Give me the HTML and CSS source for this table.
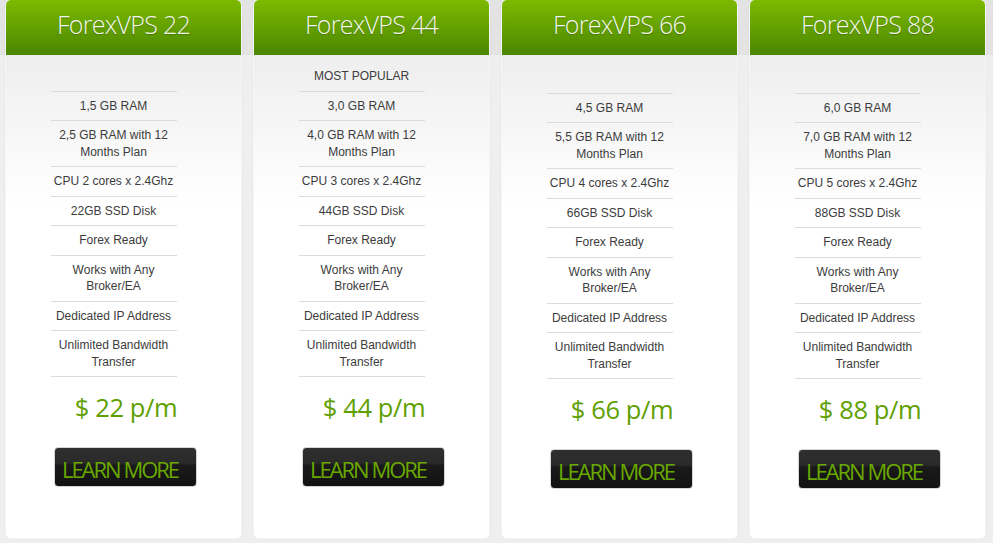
FILE: index.html
```html
<!DOCTYPE html>
<html>
<head>
<meta charset="utf-8">
<link rel="stylesheet" href="styles.css">
</head>
<body>
<div class="plans">
  <div class="card">
    <div class="head">ForexVPS 22</div>
    <div class="body">
      <ul class="features">
        <li class="empty"></li>
        <li>1,5 GB RAM</li>
        <li>2,5 GB RAM with 12<br>Months Plan</li>
        <li>CPU 2 cores x 2.4Ghz</li>
        <li>22GB SSD Disk</li>
        <li>Forex Ready</li>
        <li>Works with Any<br>Broker/EA</li>
        <li>Dedicated IP Address</li>
        <li>Unlimited Bandwidth<br>Transfer</li>
      </ul>
      <div class="price">$ 22 p/m</div>
      <a class="btn">LEARN MORE</a>
    </div>
  </div>
  <div class="card">
    <div class="head">ForexVPS 44</div>
    <div class="body">
      <ul class="features">
        <li>MOST POPULAR</li>
        <li>3,0 GB RAM</li>
        <li>4,0 GB RAM with 12<br>Months Plan</li>
        <li>CPU 3 cores x 2.4Ghz</li>
        <li>44GB SSD Disk</li>
        <li>Forex Ready</li>
        <li>Works with Any<br>Broker/EA</li>
        <li>Dedicated IP Address</li>
        <li>Unlimited Bandwidth<br>Transfer</li>
      </ul>
      <div class="price">$ 44 p/m</div>
      <a class="btn">LEARN MORE</a>
    </div>
  </div>
  <div class="card">
    <div class="head">ForexVPS 66</div>
    <div class="body">
      <ul class="features">
        <li class="empty tall"></li>
        <li>4,5 GB RAM</li>
        <li>5,5 GB RAM with 12<br>Months Plan</li>
        <li>CPU 4 cores x 2.4Ghz</li>
        <li>66GB SSD Disk</li>
        <li>Forex Ready</li>
        <li>Works with Any<br>Broker/EA</li>
        <li>Dedicated IP Address</li>
        <li>Unlimited Bandwidth<br>Transfer</li>
      </ul>
      <div class="price">$ 66 p/m</div>
      <a class="btn">LEARN MORE</a>
    </div>
  </div>
  <div class="card">
    <div class="head">ForexVPS 88</div>
    <div class="body">
      <ul class="features">
        <li class="empty tall"></li>
        <li>6,0 GB RAM</li>
        <li>7,0 GB RAM with 12<br>Months Plan</li>
        <li>CPU 5 cores x 2.4Ghz</li>
        <li>88GB SSD Disk</li>
        <li>Forex Ready</li>
        <li>Works with Any<br>Broker/EA</li>
        <li>Dedicated IP Address</li>
        <li>Unlimited Bandwidth<br>Transfer</li>
      </ul>
      <div class="price">$ 88 p/m</div>
      <a class="btn">LEARN MORE</a>
    </div>
  </div>
</div>
</body>
</html>
```

FILE: styles.css
```css
html, body {
  margin: 0;
  padding: 0;
}
body {
  width: 993px;
  height: 543px;
  overflow: hidden;
  background: linear-gradient(to bottom, #e3e3e3 0, #e3e3e3 55px, #efefef 55px, #efefef 100%);
  font-family: "Liberation Sans", Arial, sans-serif;
}
.plans {
  display: flex;
  gap: 13px;
  padding-left: 6px;
}
.card {
  width: 235px;
  height: 538px;
  display: flex;
  flex-direction: column;
  border-radius: 5px;
  overflow: hidden;
  background: #fff;
  box-shadow: 0 0 0 1px #f6f6f6, 0 0 3px rgba(0,0,0,0.12);
}
.head {
  height: 55px;
  flex: none;
  background: linear-gradient(to bottom, #7cb900 0%, #66a300 45%, #4a8600 100%);
  color: #f2f7ea;
  font-family: "Open Sans", sans-serif;
  font-weight: 300;
  font-size: 25px;
  letter-spacing: -0.7px;
  line-height: 48px;
  text-align: center;
  text-shadow: 0 1px 1px rgba(0,0,0,0.25);
}
.body {
  flex: 1;
  display: flex;
  flex-direction: column;
  align-items: center;
  background: linear-gradient(to bottom, #eeeeee 0, #ffffff 150px, #ffffff 100%);
  padding-top: 7px;
}
.features {
  list-style: none;
  margin: 0 0 0 -20px;
  padding: 0;
  width: 126px;
}
.features li {
  font-size: 12px;
  line-height: 16.5px;
  color: #3c3c3c;
  text-align: center;
  padding: 6px 0 6px;
  border-bottom: 1px solid #dcdcdc;
  white-space: nowrap;
}
.features li.empty {
  height: 16.5px;
}
.features li.empty.tall {
  height: 18.5px;
}
.price {
  margin-top: 14px;
  margin-left: 5px;
  font-family: "Open Sans", sans-serif;
  font-size: 25.5px;
  line-height: 32px;
  color: #5f9f00;
  letter-spacing: -0.4px;
}
.btn {
  margin-top: 24px;
  margin-left: 3px;
  display: flex;
  align-items: center;
  justify-content: center;
  border-radius: 4px;
  border: 1px solid #d6d6d6;
  background: linear-gradient(to bottom, #2e2e2e 0%, #2a2a2a 40%, #1a1a1a 45%, #121212 100%);
  color: #6aa800;
  font-family: "Open Sans", sans-serif;
  font-size: 22px;
  letter-spacing: -2px;
  padding: 3px 10px 0 0;
  box-sizing: content-box;
  width: 131px;
  height: 35px;
}
```
